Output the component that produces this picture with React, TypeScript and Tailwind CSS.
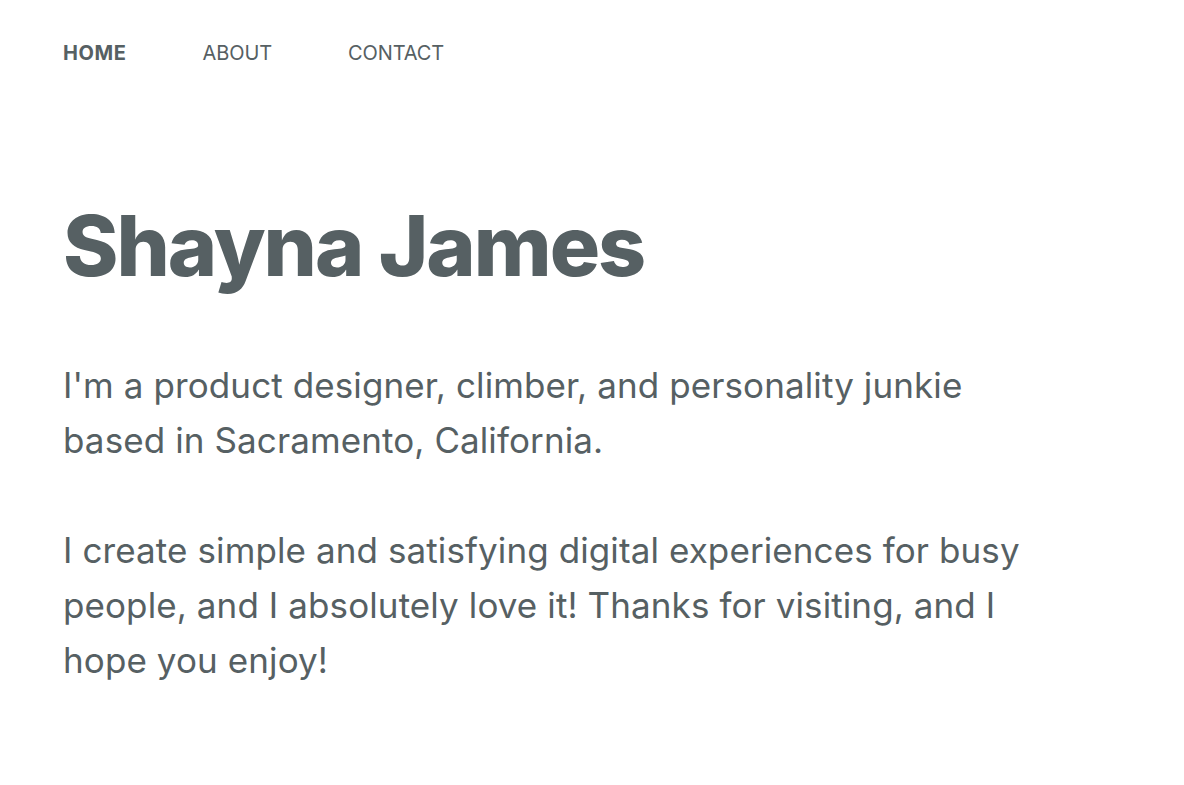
const NAV = ["HOME", "ABOUT", "CONTACT"];

export default function App() {
  return (
    <div className="min-h-[785px] bg-white px-[63px] pt-[40px] font-['Inter',sans-serif] text-[#566063]">
      <nav className="flex gap-[76px] text-[20px] leading-[26px]">
        {NAV.map((item, i) => (
          <a key={item} href="#" className={i === 0 ? "font-bold tracking-[0.6px]" : "font-normal tracking-[-0.1px]"}>
            {item}
          </a>
        ))}
      </nav>

      <main className="mt-[130px] max-w-[1000px]">
        <h1 className="text-[84px] font-extrabold leading-[100px] tracking-[-2px]">Shayna James</h1>
        <div className="mt-[62px] text-[35px] leading-[55px] tracking-[0.1px]">
          <p>I'm a product designer, climber, and personality junkie based in Sacramento, California.</p>
          <p className="mt-[55px]">
            I create simple and satisfying digital experiences for busy people, and I absolutely love it! Thanks for
            visiting, and I hope you enjoy!
          </p>
        </div>
      </main>
    </div>
  );
}
